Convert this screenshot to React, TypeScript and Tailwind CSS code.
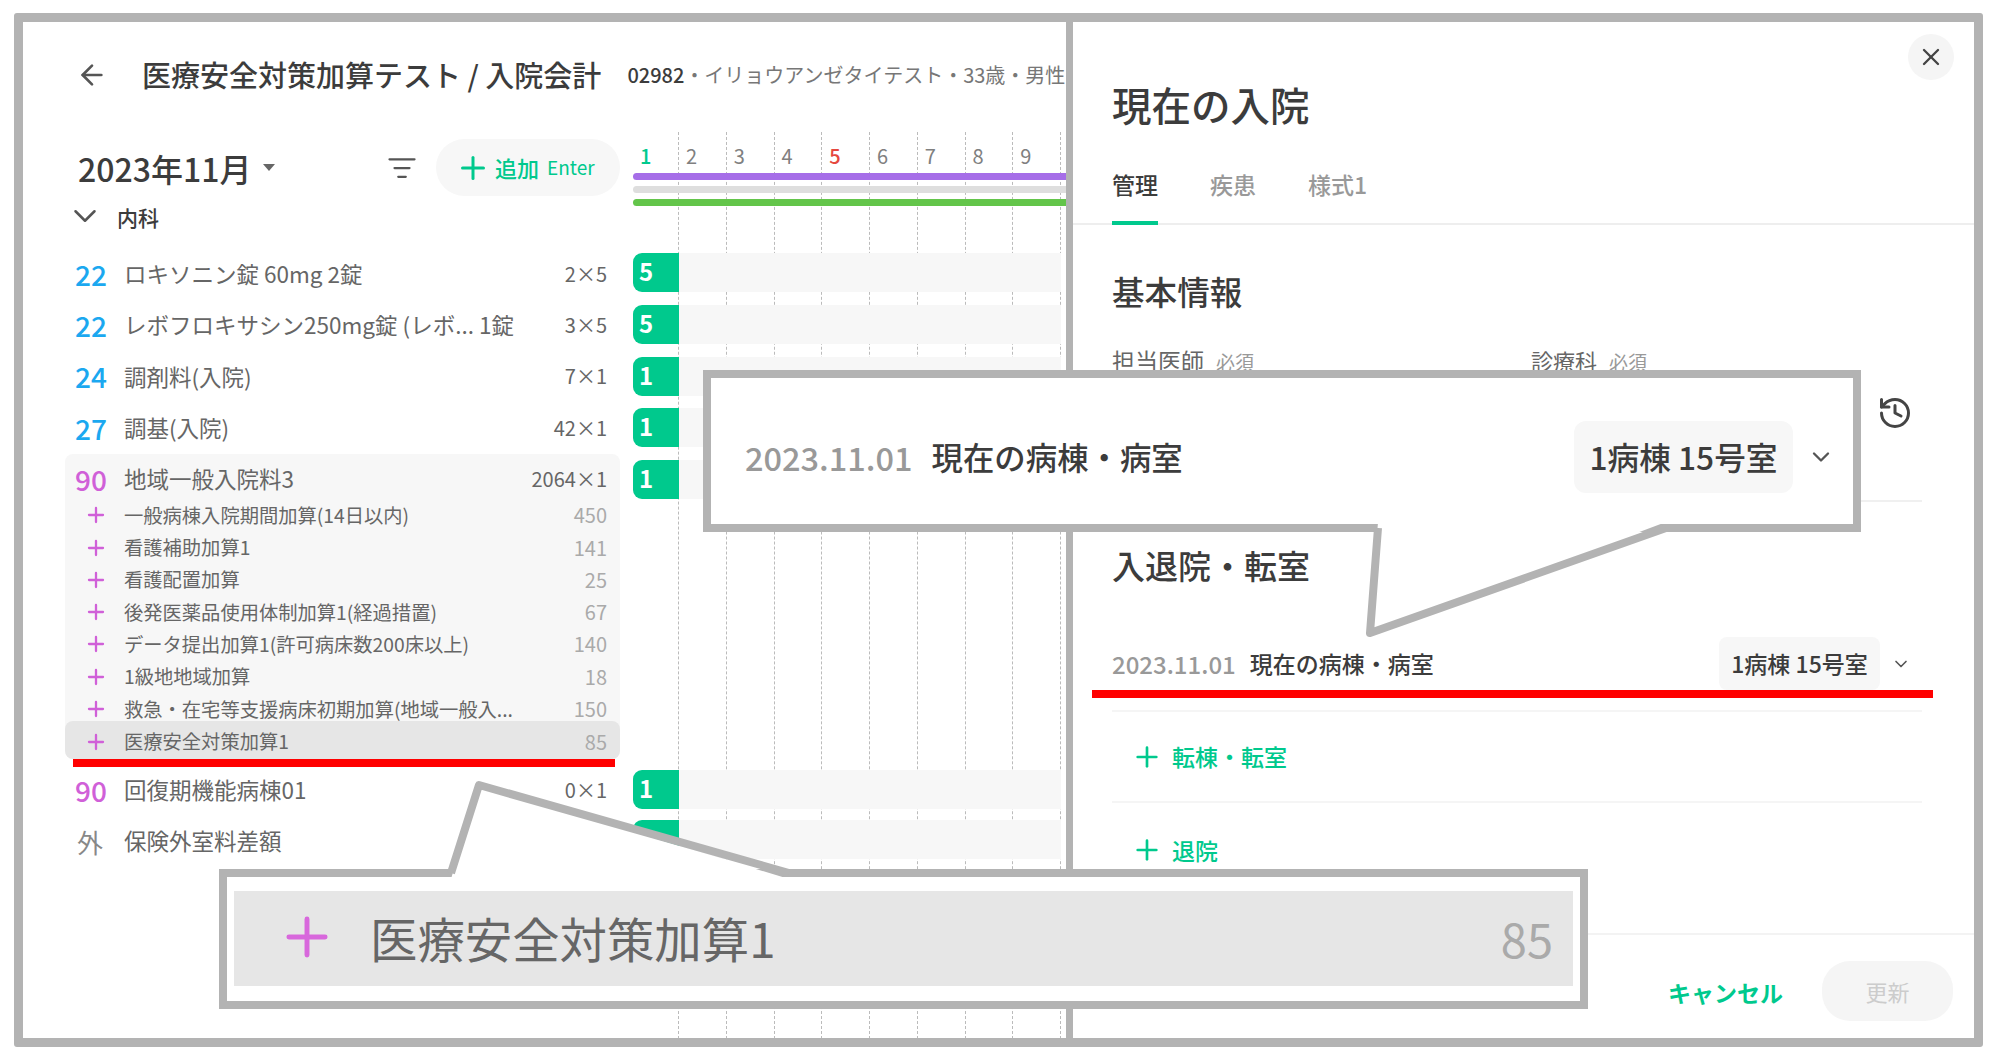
import { ArrowLeft, ChevronDown, History, ListFilter, Plus, X } from "lucide-react";

const days = ["2", "3", "4", "5", "6", "7", "8", "9"];

const subItems = [
  { label: "一般病棟入院期間加算(14日以内)", value: "450" },
  { label: "看護補助加算1", value: "141" },
  { label: "看護配置加算", value: "25" },
  { label: "後発医薬品使用体制加算1(経過措置)", value: "67" },
  { label: "データ提出加算1(許可病床数200床以上)", value: "140" },
  { label: "1級地地域加算", value: "18" },
  { label: "救急・在宅等支援病床初期加算(地域一般入...", value: "150" }
];

const topRows = [
  { code: "22", label: "ロキソニン錠 60mg 2錠", value: "2×5" },
  { code: "22", label: "レボフロキサシン250mg錠 (レボ... 1錠", value: "3×5" },
  { code: "24", label: "調剤料(入院)", value: "7×1" },
  { code: "27", label: "調基(入院)", value: "42×1" }
];

function OrderRow({ code, label, value, codeClass }: { code: string; label: string; value?: string; codeClass: string }) {
  return (
    <div className="ml-[42px] flex h-[51.4px] w-[555px] items-center pl-[10px] pr-[13px]">
      <span className={`w-[49px] flex-none text-[28px] font-medium ${codeClass}`}>{code}</span>
      <span className="flex-1 whitespace-nowrap text-[22.5px] text-[#666666]">{label}</span>
      {value && <span className="whitespace-nowrap text-[20px] text-[#666666]">{value}</span>}
    </div>
  );
}

function SubRow({ label, value, className }: { label: string; value: string; className: string }) {
  return (
    <div className={`flex items-center pl-[19px] pr-[13px] ${className}`}>
      <Plus className="mr-[16px] h-[24px] w-[24px] flex-none text-[#d060d8]" strokeWidth={2.3} />
      <span className="flex-1 whitespace-nowrap text-[19.3px] text-[#666666]">{label}</span>
      <span className="text-[20px] text-[#aaaaaa]">{value}</span>
    </div>
  );
}

function GanttRow({ count, className }: { count?: string; className: string }) {
  return (
    <div className={`flex h-[39px] ${className}`}>
      <div className="w-[46px] flex-none rounded-l-[9px] bg-[#00c98d] pl-[6px] text-[24px] font-bold leading-[35px] text-white">{count}</div>
      <div className="w-[382px] flex-none bg-[#f7f7f7]" />
    </div>
  );
}

function TransferAction({ label, className }: { label: string; className: string }) {
  return (
    <div className={`flex items-center pl-[19px] text-[23px] font-medium text-[#00c98d] ${className}`}>
      <Plus className="mr-[9px] h-[32px] w-[32px]" strokeWidth={2} />
      {label}
    </div>
  );
}

export default function App() {
  return (
    <div className="relative h-[1059px] w-[2000px] overflow-hidden bg-white pl-[14px] pt-[13px] font-['Noto_Sans_CJK_JP','Noto_Sans',sans-serif] text-[#3c3c3c]">
      <div className="flex h-[1034px] w-[1969px] overflow-hidden rounded-[3px] border-[9px] border-[#b3b3b3]">
        {/* left: order list and calendar */}
        <div className="w-[1043px] flex-none overflow-hidden">
          <div className="flex h-[110px] items-start whitespace-nowrap pl-[53px] pt-[36px] leading-[34px]">
            <ArrowLeft className="mt-[1px] h-[32px] w-[32px] flex-none text-[#555555]" strokeWidth={2} />
            <span className="-mt-[1px] ml-[34px] text-[29px] font-medium">医療安全対策加算テスト / 入院会計</span>
            <span className="ml-[26px] text-[20px] font-medium">02982</span>
            <span className="text-[20px] text-[#777777]">・イリョウアンゼタイテスト・33歳・男性</span>
          </div>

          <div className="flex">
            <div className="w-[610px] flex-none">
              <div className="mt-[7px] flex h-[57px] items-center pl-[55px] pr-[13px]">
                <span className="text-[32px] font-medium">2023年11月</span>
                <svg className="ml-[12px]" width="12" height="7" viewBox="0 0 12 7">
                  <path d="M0 0h12L6 7z" fill="#666666" />
                </svg>
                <ListFilter className="ml-auto h-[30px] w-[30px] text-[#555555]" strokeWidth={1.8} />
                <div className="ml-[19px] flex h-[57px] w-[184px] items-center rounded-full bg-[#f7f7f7] pl-[19px] text-[#00c98d]">
                  <Plus className="h-[36px] w-[36px]" strokeWidth={2} />
                  <span className="ml-[4px] text-[22px] font-medium">追加</span>
                  <span className="ml-[8px] text-[19px]">Enter</span>
                </div>
              </div>
              <div className="flex h-[44px] items-center pl-[43px]">
                <ChevronDown className="-mt-[4px] h-[38px] w-[38px] text-[#555555]" strokeWidth={1.6} />
                <span className="ml-[13px] text-[21px] font-medium">内科</span>
              </div>

              <div className="mt-[8px]">
                {topRows.map((row) => (
                  <OrderRow key={row.label} code={row.code} label={row.label} value={row.value} codeClass="text-[#1ba8f0]" />
                ))}
              </div>

              <div className="ml-[42px] w-[555px] rounded-[8px] bg-[#f7f7f7]">
                <div className="flex h-[45.5px] items-center pl-[10px] pr-[13px] pt-[6px]">
                  <span className="w-[49px] flex-none text-[28px] font-medium text-[#d060d8]">90</span>
                  <span className="flex-1 text-[22.5px] text-[#666666]">地域一般入院料3</span>
                  <span className="text-[20px] text-[#666666]">2064×1</span>
                </div>
                {subItems.map((item) => (
                  <SubRow key={item.label} label={item.label} value={item.value} className="h-[32.3px]" />
                ))}
                <SubRow label="医療安全対策加算1" value="85" className="-mt-[4px] h-[38px] rounded-[8px] bg-[#e6e6e6] pt-[3px]" />
              </div>
              <div className="ml-[50px] h-[8px] w-[542px] bg-[#ff0000]" />
              <div className="ml-[42px] flex h-[46px] w-[555px] items-center pl-[10px] pr-[13px]">
                <span className="w-[49px] flex-none text-[28px] font-medium text-[#d060d8]">90</span>
                <span className="flex-1 text-[22.5px] text-[#666666]">回復期機能病棟01</span>
                <span className="text-[20px] text-[#666666]">0×1</span>
              </div>
              <div className="ml-[42px] flex h-[56px] w-[555px] items-center pl-[12px] pr-[13px]">
                <span className="w-[47px] flex-none text-[26px] text-[#888888]">外</span>
                <span className="flex-1 text-[22.5px] text-[#666666]">保険外室料差額</span>
              </div>
            </div>

            {/* calendar */}
            <div className="relative h-[907px] w-[433px] flex-none">
              <div className="absolute inset-0 flex">
                <div className="w-[46px] flex-none border-r border-dashed border-[#bbbbbb]" />
                {days.map((day) => (
                  <div key={day} className="w-[47.75px] flex-none border-r border-dashed border-[#bbbbbb]" />
                ))}
              </div>
              <div className="relative">
                <div className="flex h-[41px] pt-[12px] text-[20px] leading-[24px]">
                  <div className="w-[46px] flex-none pl-[7px] font-medium text-[#00c98d]">1</div>
                  {days.map((day) => (
                    <div key={day} className={`w-[47.75px] flex-none pl-[7px] ${day === "5" ? "font-medium text-[#e5483e]" : "text-[#808080]"}`}>
                      {day}
                    </div>
                  ))}
                </div>
                <div className="h-[7px] rounded-l-full bg-[#a66ee8]" />
                <div className="mt-[6px] h-[7px] rounded-l-full bg-[#dedede]" />
                <div className="mt-[6px] h-[7px] rounded-l-full bg-[#63c54a]" />
                <GanttRow count="5" className="mt-[47px]" />
                <GanttRow count="5" className="mt-[13px]" />
                <GanttRow count="1" className="mt-[13px]" />
                <GanttRow count="1" className="mt-[12px]" />
                <GanttRow count="1" className="mt-[13px]" />
                <GanttRow count="1" className="mt-[271px]" />
                <GanttRow className="mt-[11px]" />
              </div>
            </div>
          </div>
        </div>

        {/* drawer */}
        <div className="w-[7px] flex-none bg-[#b3b3b3]" />
        <div className="relative flex min-w-0 flex-1 flex-col">
          <button className="absolute right-[20px] top-[12px] flex h-[46px] w-[46px] items-center justify-center rounded-full bg-[#f5f5f5]">
            <X className="h-[28px] w-[28px] text-[#444444]" strokeWidth={2} />
          </button>

          <div className="flex-1 pl-[39px] pr-[52px]">
            <h1 className="mt-[57px] text-[39.5px] font-medium leading-[50px]">現在の入院</h1>
            <div className="-ml-[39px] -mr-[52px] flex h-[96px] items-end gap-[52px] border-b-2 border-[#eeeeee] pl-[39px] text-[23px] font-medium leading-[30px] text-[#999999]">
              <div className="-mb-[2px] border-b-4 border-[#00c98d] pb-[22px] text-[#3c3c3c]">管理</div>
              <div className="-mb-[2px] pb-[26px]">疾患</div>
              <div className="-mb-[2px] pb-[26px]">様式1</div>
            </div>

            <h2 className="mt-[44px] text-[32.6px] font-medium leading-[44px]">基本情報</h2>
            <div className="mt-[32px] flex text-[22px] leading-[30px] text-[#666666]">
              <div className="w-[419px]">
                <span className="text-[23px]">担当医師</span>
                <span className="ml-[12px] text-[19px] text-[#999999]">必須</span>
              </div>
              <div>
                診療科<span className="ml-[12px] text-[19px] text-[#999999]">必須</span>
              </div>
            </div>
            <div className="mt-[18px] flex h-[36px] justify-end pr-[9px]">
              <History className="h-[36px] w-[36px] text-[#444444]" strokeWidth={2} />
            </div>
            <div className="mt-[69px] h-[2px] bg-[#f0f0f0]" />

            <h2 className="mt-[41px] text-[33px] font-medium leading-[44px]">入退院・転室</h2>
            <div className="mt-[50px] flex h-[53px] items-center">
              <span className="text-[24px] font-medium text-[#999999]">2023.11.01</span>
              <span className="ml-[14px] flex-1 text-[23px] font-medium">現在の病棟・病室</span>
              <div className="flex h-[53px] w-[161px] items-center justify-center rounded-[8px] bg-[#f7f7f7] text-[23px] font-medium">1病棟 15号室</div>
              <ChevronDown className="ml-[11px] h-[20px] w-[20px] text-[#555555]" strokeWidth={2} />
              <div className="w-[11px]" />
            </div>
            <div className="-ml-[20px] h-[8px] w-[841px] bg-[#ff0000]" />
            <div className="mt-[12px] h-[2px] bg-[#f5f5f5]" />
            <TransferAction label="転棟・転室" className="h-[91px] border-b-2 border-[#f5f5f5]" />
            <TransferAction label="退院" className="h-[94px]" />
          </div>

          <div className="flex h-[105px] flex-none justify-end gap-[39px] border-t-2 border-[#f3f3f3] pr-[21px] pt-[26px]">
            <span className="mt-[14px] text-[23px] font-bold leading-[34px] text-[#00c98d]">キャンセル</span>
            <div className="flex h-[60px] w-[131px] items-center justify-center rounded-[28px] bg-[#f5f5f5] text-[22px] text-[#cccccc]">更新</div>
          </div>
        </div>
      </div>

      {/* callout: current ward row */}
      <div className="absolute left-[703px] top-[370px] flex h-[162px] w-[1158px] items-center border-[8px] border-[#b3b3b3] bg-white pl-[34px] pt-[12px]">
        <span className="text-[32.5px] font-medium text-[#999999]">2023.11.01</span>
        <span className="ml-[19px] flex-1 text-[31.4px] font-medium">現在の病棟・病室</span>
        <div className="flex h-[72px] w-[219px] items-center justify-center rounded-[12px] bg-[#f7f7f7] text-[31.7px] font-medium">1病棟 15号室</div>
        <ChevronDown className="ml-[14px] mr-[18px] h-[28px] w-[28px] text-[#555555]" strokeWidth={2} />
      </div>

      {/* callout: selected add-on row */}
      <div className="absolute left-[219px] top-[869px] h-[140px] w-[1369px] border-[8px] border-[#b3b3b3] bg-white pl-[7px] pt-[14px]">
        <div className="flex h-[95px] w-[1339px] items-center bg-[#e6e6e6] pl-[42px] pr-[20px]">
          <Plus className="-mt-[3px] h-[62px] w-[62px] flex-none text-[#d868dc]" strokeWidth={1.9} />
          <span className="-mt-[2px] ml-[32px] flex-1 text-[47.4px] text-[#666666]">医療安全対策加算1</span>
          <span className="text-[47px] text-[#aaaaaa]">85</span>
        </div>
      </div>

      <svg className="pointer-events-none absolute left-0 top-0" width="2000" height="1059" viewBox="0 0 2000 1059">
        <polygon points="1378,522 1370,633 1666,522" fill="#ffffff" />
        <polyline points="1378,528 1370,633 1666,528" fill="none" stroke="#b3b3b3" strokeWidth="8" strokeLinejoin="round" />
        <polygon points="451,879 479,785 789,879" fill="#ffffff" />
        <polyline points="451,873 479,785 789,873" fill="none" stroke="#b3b3b3" strokeWidth="8" strokeLinejoin="round" />
      </svg>
    </div>
  );
}
